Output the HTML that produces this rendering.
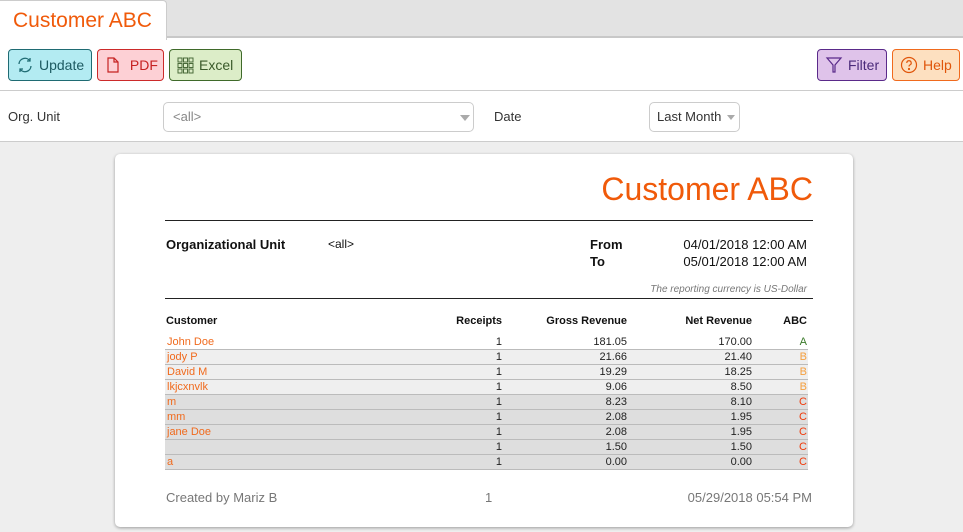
<!DOCTYPE html>
<html><head><meta charset="utf-8"><style>
*{margin:0;padding:0;box-sizing:border-box}
body{width:963px;height:532px;overflow:hidden;background:#fff;font-family:"Liberation Sans",Arial,sans-serif;position:relative}
.a{position:absolute}
.btn{position:absolute;top:49px;height:32px;border:1px solid;border-radius:4px;font-size:14px;line-height:30px;display:flex;align-items:center;padding-left:7px;gap:5px}
.sel{position:absolute;border:1px solid #ccc;border-radius:5px;font-size:13px;line-height:28px;height:30px}
.tri{position:absolute;right:4px;top:12px;width:0;height:0;border-left:5px solid transparent;border-right:5px solid transparent;border-top:6px solid #aaa}
.r{position:absolute;left:165px;width:643px;height:15px;font-size:11px;line-height:15px;border-bottom:1px solid #bbb;color:#222}
.r span{position:absolute}
.c1{left:2px;color:#f06a1d}.c2{right:306px}.c3{right:181px}.c4{right:56px}.c5{right:1px}
</style></head><body>
<div class="a" style="left:0;top:0;width:963px;height:38px;background:#e3e3e3;border-bottom:2px solid #c8c8c8"></div>
<div class="a" style="left:0;top:0;width:167px;height:40px;background:#fff;border:1px solid #ccc;border-bottom:none;border-left:none;border-radius:0 4px 0 0"></div>
<div class="a" style="left:13px;top:9px;font-size:21px;color:#f05a0a">Customer ABC</div>

<div class="btn" style="left:8px;width:84px;background:#b3ebf2;border-color:#1f6b73;color:#1c5a61">
<svg width="18" height="18" viewBox="0 0 18 18" fill="none" stroke="#1f6b73" stroke-width="1.3"><path d="M3 8a6 6 0 0 1 11-3M15 10a6 6 0 0 1-11 3"/><path d="M14 2v3h-3M4 16v-3h3"/></svg>Update</div>
<div class="btn" style="left:97px;width:67px;background:#fdd0d5;border-color:#cc2a2a;color:#c62222">
<svg width="16" height="18" viewBox="0 0 16 18" fill="none" stroke="#c62222" stroke-width="1.2"><path d="M3 2h6l4 4v10H3z M9 2v4h4"/></svg>&nbsp;PDF</div>
<div class="btn" style="left:169px;width:73px;background:#dcedc8;border-color:#3f6a2a;color:#3a5a2a">
<svg width="17" height="17" viewBox="0 0 17 17" fill="none" stroke="#4a6a3a" stroke-width="1"><rect x="1" y="1" width="4" height="4"/><rect x="6.5" y="1" width="4" height="4"/><rect x="12" y="1" width="4" height="4"/><rect x="1" y="6.5" width="4" height="4"/><rect x="6.5" y="6.5" width="4" height="4"/><rect x="12" y="6.5" width="4" height="4"/><rect x="1" y="12" width="4" height="4"/><rect x="6.5" y="12" width="4" height="4"/><rect x="12" y="12" width="4" height="4"/></svg>Excel</div>
<div class="btn" style="left:817px;width:70px;background:#dfc3ea;border-color:#5a2a8a;color:#4a2a7a">
<svg width="18" height="18" viewBox="0 0 18 18" fill="none" stroke="#5a2a8a" stroke-width="1.2"><path d="M2 2h14l-6 7v7h-2V9z"/></svg>Filter</div>
<div class="btn" style="left:892px;width:68px;background:#fde0c0;border-color:#f06a1d;color:#e0550a">
<svg width="18" height="18" viewBox="0 0 18 18" fill="none" stroke="#e0550a" stroke-width="1.2"><circle cx="9" cy="9" r="7.5"/><path d="M6.8 7a2.2 2.2 0 1 1 3 2c-.6.3-.8.7-.8 1.5"/><circle cx="9" cy="13" r=".5" fill="#e0550a"/></svg>Help</div>

<div class="a" style="left:0;top:90px;width:963px;height:1px;background:#ccc"></div>
<div class="a" style="left:8px;top:109px;font-size:13px;color:#333">Org. Unit</div>
<div class="sel" style="left:163px;top:102px;width:311px;color:#888;padding-left:9px">&lt;all&gt;<div class="tri" style="right:3px"></div></div>
<div class="a" style="left:494px;top:109px;font-size:13px;color:#333">Date</div>
<div class="sel" style="left:649px;top:102px;width:91px;color:#333;padding-left:7px">Last Month<div class="tri" style="right:4px;border-left-width:4px;border-right-width:4px;border-top-width:5px"></div></div>

<div class="a" style="left:0;top:141px;width:963px;height:391px;background:#eee;border-top:1px solid #ccc"></div>
<div class="a" style="left:115px;top:154px;width:738px;height:373px;background:#fff;border-radius:5px;box-shadow:0 1px 3px rgba(0,0,0,.35)"></div>

<div class="a" style="right:150px;top:171px;font-size:32px;color:#f05a0a">Customer ABC</div>
<div class="a" style="left:165px;top:220px;width:648px;height:1px;background:#222"></div>
<div class="a" style="left:166px;top:237px;font-size:13px;font-weight:bold;color:#111">Organizational Unit</div>
<div class="a" style="left:328px;top:237px;font-size:12px;color:#111">&lt;all&gt;</div>
<div class="a" style="left:590px;top:237px;font-size:13px;font-weight:bold;color:#111">From</div>
<div class="a" style="left:590px;top:254px;font-size:13px;font-weight:bold;color:#111">To</div>
<div class="a" style="right:156px;top:237px;font-size:13px;color:#111">04/01/2018 12:00 AM</div>
<div class="a" style="right:156px;top:254px;font-size:13px;color:#111">05/01/2018 12:00 AM</div>
<div class="a" style="right:156px;top:284px;font-size:10px;font-style:italic;color:#777">The reporting currency is US-Dollar</div>
<div class="a" style="left:165px;top:298px;width:648px;height:1px;background:#222"></div>

<div class="r" style="top:314px;border:none;font-weight:bold;color:#111"><span style="left:1px">Customer</span><span class="c2">Receipts</span><span class="c3">Gross Revenue</span><span class="c4">Net Revenue</span><span class="c5">ABC</span></div>

<div class="r" style="top:335px"><span class="c1">John Doe</span><span class="c2">1</span><span class="c3">181.05</span><span class="c4">170.00</span><span class="c5" style="color:#3a7a2a">A</span></div>
<div class="r" style="top:350px;background:#efefef"><span class="c1">jody P</span><span class="c2">1</span><span class="c3">21.66</span><span class="c4">21.40</span><span class="c5" style="color:#f5a040">B</span></div>
<div class="r" style="top:365px;background:#efefef"><span class="c1">David M</span><span class="c2">1</span><span class="c3">19.29</span><span class="c4">18.25</span><span class="c5" style="color:#f5a040">B</span></div>
<div class="r" style="top:380px;background:#efefef"><span class="c1">lkjcxnvlk</span><span class="c2">1</span><span class="c3">9.06</span><span class="c4">8.50</span><span class="c5" style="color:#f5a040">B</span></div>
<div class="r" style="top:395px;background:#dedede"><span class="c1">m</span><span class="c2">1</span><span class="c3">8.23</span><span class="c4">8.10</span><span class="c5" style="color:#f03a0a">C</span></div>
<div class="r" style="top:410px;background:#dedede"><span class="c1">mm</span><span class="c2">1</span><span class="c3">2.08</span><span class="c4">1.95</span><span class="c5" style="color:#f03a0a">C</span></div>
<div class="r" style="top:425px;background:#dedede"><span class="c1">jane Doe</span><span class="c2">1</span><span class="c3">2.08</span><span class="c4">1.95</span><span class="c5" style="color:#f03a0a">C</span></div>
<div class="r" style="top:440px;background:#dedede"><span class="c1"></span><span class="c2">1</span><span class="c3">1.50</span><span class="c4">1.50</span><span class="c5" style="color:#f03a0a">C</span></div>
<div class="r" style="top:455px;background:#dedede"><span class="c1">a</span><span class="c2">1</span><span class="c3">0.00</span><span class="c4">0.00</span><span class="c5" style="color:#f03a0a">C</span></div>

<div class="a" style="left:166px;top:490px;font-size:13px;color:#777">Created by Mariz B</div>
<div class="a" style="left:485px;top:490px;font-size:13px;color:#777">1</div>
<div class="a" style="right:151px;top:490px;font-size:13px;color:#777">05/29/2018 05:54 PM</div>
</body></html>
